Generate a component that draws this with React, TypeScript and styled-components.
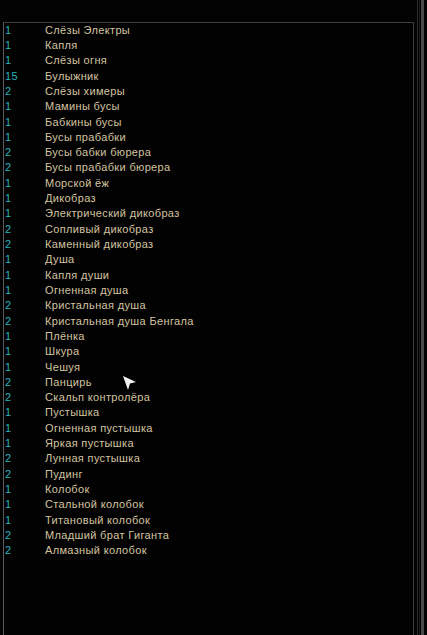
import React from "react";
import styled, { createGlobalStyle } from "styled-components";

const Global = createGlobalStyle`
  html, body { margin: 0; padding: 0; background: #030303; }
  body { width: 427px; height: 635px; overflow: hidden; font-family: "Liberation Sans", Arial, sans-serif; }
`;

const Page = styled.div`
  display: flex;
  height: 635px;
  width: 427px;
  background: #030303;
`;

const Panel = styled.div`
  position: relative;
  margin: 22px 0 0 3px;
  width: 409px;
  border: 1px solid #3e3e3e;
  border-left-color: #5a5a5a;
  border-bottom: none;
  background: #020202;
`;

const List = styled.div`
  display: flex;
  flex-direction: column;
  margin-top: -1px;
`;

const Row = styled.div`
  display: flex;
  align-items: center;
  height: 15.32px;
  font-size: 11px;
  letter-spacing: 0.35px;
`;

const Count = styled.span`
  width: 40px;
  padding-left: 1px;
  color: #27b3bc;
`;

const Name = styled.span`
  color: #d3c3a0;
`;

const Scroll = styled.div`
  display: flex;
  margin-left: 3px;
  gap: 1px;
`;

const Track = styled.div<{ w: number; c: string }>`
  width: ${(p) => p.w}px;
  background: ${(p) => p.c};
`;

const Cursor = styled.svg`
  position: absolute;
  left: 117px;
  top: 352px;
`;

const items: [number, string][] = [
  [1, "Слёзы Электры"],
  [1, "Капля"],
  [1, "Слёзы огня"],
  [15, "Булыжник"],
  [2, "Слёзы химеры"],
  [1, "Мамины бусы"],
  [1, "Бабкины бусы"],
  [1, "Бусы прабабки"],
  [2, "Бусы бабки бюрера"],
  [2, "Бусы прабабки бюрера"],
  [1, "Морской ёж"],
  [1, "Дикобраз"],
  [1, "Электрический дикобраз"],
  [2, "Сопливый дикобраз"],
  [2, "Каменный дикобраз"],
  [1, "Душа"],
  [1, "Капля души"],
  [1, "Огненная душа"],
  [2, "Кристальная душа"],
  [2, "Кристальная душа Бенгала"],
  [1, "Плёнка"],
  [1, "Шкура"],
  [1, "Чешуя"],
  [2, "Панцирь"],
  [2, "Скальп контролёра"],
  [1, "Пустышка"],
  [1, "Огненная пустышка"],
  [1, "Яркая пустышка"],
  [2, "Лунная пустышка"],
  [2, "Пудинг"],
  [1, "Колобок"],
  [1, "Стальной колобок"],
  [1, "Титановый колобок"],
  [2, "Младший брат Гиганта"],
  [2, "Алмазный колобок"],
];

export default function App() {
  return (
    <>
      <Global />
      <Page>
        <Panel>
          <List>
            {items.map(([n, name], i) => (
              <Row key={i}>
                <Count>{n}</Count>
                <Name>{name}</Name>
              </Row>
            ))}
          </List>
          <Cursor width="16" height="16" viewBox="0 0 16 16">
            <path d="M2 1 L15 7 L9 8.5 L7 15 Z" fill="#f2f2f2" />
          </Cursor>
        </Panel>
        <Scroll>
          <Track w={1} c="#2a2a2a" />
          <Track w={1} c="#1a1a1a" />
          <Track w={3} c="#4a4a4a" />
        </Scroll>
      </Page>
    </>
  );
}
